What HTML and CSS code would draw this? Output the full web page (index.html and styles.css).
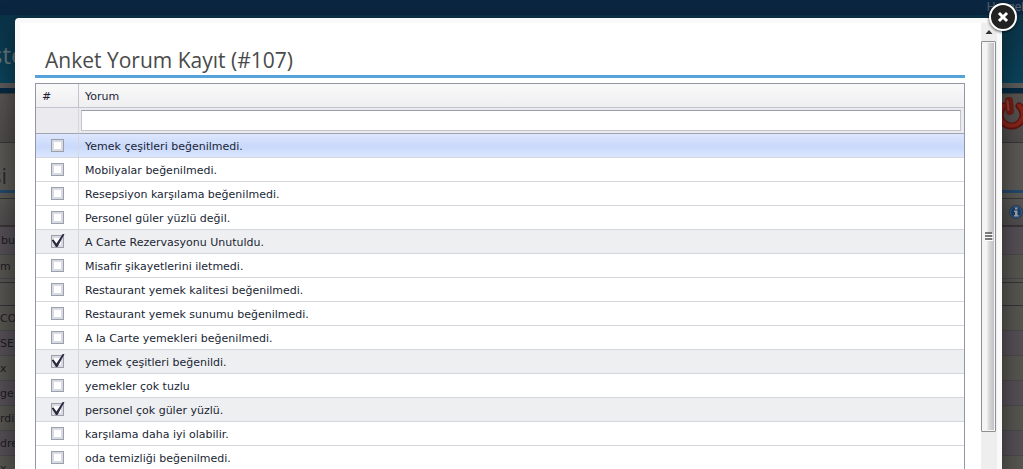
FILE: index.html
```html
<!DOCTYPE html>
<html lang="tr">
<head>
<meta charset="utf-8">
<title>Anket Yorum Kayıt</title>
<link rel="stylesheet" href="styles.css">
</head>
<body>
<div class="page" aria-hidden="true">
  <div class="topbar"><span>Hoşgel</span></div>
  <div class="banner"><span>ste</span></div>
  <div class="divider"></div>
  <div class="toolbar">
    <svg class="power" viewBox="0 0 32 34" width="32" height="34">
      <path d="M8 9 A11.500 11.500 0 1 0 23 9" fill="none" stroke="#5f130c" stroke-width="7" stroke-linecap="round"/>
      <path d="M8 8.500 A11.500 11.500 0 1 0 23 8.500" fill="none" stroke="#84241a" stroke-width="4" stroke-linecap="round"/>
      <path d="M13 4l1 10" stroke="#701d15" stroke-width="8" stroke-linecap="round"/>
      <path d="M11.500 4l1 9" stroke="#964037" stroke-width="2" stroke-linecap="round"/>
    </svg>
  </div>
  <div class="heading"><span>si</span></div>
  <div class="listhead">
    <svg viewBox="0 0 16 16" width="16" height="16">
      <circle cx="8" cy="8" r="6.500" fill="#1c3d62" stroke="#263e58"/>
      <circle cx="8" cy="8" r="5.500" fill="none" stroke="#3d6187"/>
      <path d="M7 3.500h2.500v2H7zM6 6.500h3.500v4.500h1v1.500H6V11h1V8H6z" fill="#9aa3ad"/>
    </svg>
  </div>
  <div class="line tall mauve inset">bu</div>
  <div class="line short">m</div>
  <div class="line gap"></div>
  <div class="line filler"></div>
  <div class="line">CO</div>
  <div class="line mauve">SE</div>
  <div class="line">x</div>
  <div class="line mauve">ge</div>
  <div class="line">rdi</div>
  <div class="line mauve">dre</div>
  <div class="line">x</div>
</div>

<div class="dialog" role="dialog" aria-labelledby="title">
  <div class="content">
    <h1 id="title">Anket Yorum Kayıt (#107)</h1>
    <table class="grid">
      <thead>
        <tr class="labels"><th class="pick">#</th><th>Yorum</th></tr>
        <tr class="filter"><td></td><td><input type="text" aria-label="Yorum"></td></tr>
      </thead>
      <tbody>
        <tr class="focused"><td><input type="checkbox" id="c1"></td><td><label for="c1">Yemek çeşitleri beğenilmedi.</label></td></tr>
        <tr><td><input type="checkbox" id="c2"></td><td><label for="c2">Mobilyalar beğenilmedi.</label></td></tr>
        <tr><td><input type="checkbox" id="c3"></td><td><label for="c3">Resepsiyon karşılama beğenilmedi.</label></td></tr>
        <tr><td><input type="checkbox" id="c4"></td><td><label for="c4">Personel güler yüzlü değil.</label></td></tr>
        <tr class="selected"><td><input type="checkbox" id="c5" checked></td><td><label for="c5">A Carte Rezervasyonu Unutuldu.</label></td></tr>
        <tr><td><input type="checkbox" id="c6"></td><td><label for="c6">Misafir şikayetlerini iletmedi.</label></td></tr>
        <tr><td><input type="checkbox" id="c7"></td><td><label for="c7">Restaurant yemek kalitesi beğenilmedi.</label></td></tr>
        <tr><td><input type="checkbox" id="c8"></td><td><label for="c8">Restaurant yemek sunumu beğenilmedi.</label></td></tr>
        <tr><td><input type="checkbox" id="c9"></td><td><label for="c9">A la Carte yemekleri beğenilmedi.</label></td></tr>
        <tr class="selected"><td><input type="checkbox" id="c10" checked></td><td><label for="c10">yemek çeşitleri beğenildi.</label></td></tr>
        <tr><td><input type="checkbox" id="c11"></td><td><label for="c11">yemekler çok tuzlu</label></td></tr>
        <tr class="selected"><td><input type="checkbox" id="c12" checked></td><td><label for="c12">personel çok güler yüzlü.</label></td></tr>
        <tr><td><input type="checkbox" id="c13"></td><td><label for="c13">karşılama daha iyi olabilir.</label></td></tr>
        <tr><td><input type="checkbox" id="c14"></td><td><label for="c14">oda temizliği beğenilmedi.</label></td></tr>
      </tbody>
    </table>
  </div>
  <div class="scrollbar">
    <svg class="arrow" viewBox="0 0 16 18" width="16" height="18"><path d="M8 7l3.500 4h-7z" fill="#333"/></svg>
    <div class="thumb">
      <svg viewBox="0 0 8 9" width="8" height="9"><path d="M0 1h7M0 4h7M0 7h7" stroke="#555" stroke-width="1.500"/><path d="M1 2.500h7M1 5.500h7M1 8.500h7" stroke="#fff" stroke-width="1"/></svg>
    </div>
  </div>
  <button class="close" type="button" aria-label="Kapat">
    <svg viewBox="0 0 12 12" width="12" height="12"><path d="M3 3l6 6M9 3l-6 6" stroke="#fff" stroke-width="3" stroke-linecap="square"/></svg>
  </button>
</div>
</body>
</html>
```

FILE: styles.css
```css
* { box-sizing: border-box; }

body {
  margin: 0;
  height: 100vh;
  overflow: hidden;
  font-family: Verdana, "DejaVu Sans", sans-serif;
  font-size: 11px;
  color: #201f35;
}

/* Dimmed page behind the dialog */
.page {
  height: 100vh;
  overflow: hidden;
  background: #5a5854;
  color: #211a22;
}
.page > div { display: flex; align-items: center; white-space: nowrap; }
.topbar {
  height: 15px;
  justify-content: flex-end;
  background: #0b2640;
  color: #56616b;
  font: 12px/12px "Liberation Sans", sans-serif;
}
.topbar span { margin-right: -1px; padding-bottom: 2px; }
.banner {
  height: 68px;
  padding-top: 12px;
  background: linear-gradient(#0b3247, #0a445c);
  color: #65757a;
  font: 24px/30px "Open Sans", sans-serif;
}
.banner span { margin-left: -9px; }
.divider {
  height: 11px;
  background: #062a42;
  border-top: 5px solid #5a5a5a;
  border-bottom: 1px solid #3e3c3b;
}
.toolbar {
  height: 49px;
  justify-content: flex-end;
  background: linear-gradient(#575452, #4d4a4a);
  border-bottom: 1px solid #383639;
}
.power { margin-right: -5px; margin-bottom: 8px; }
.heading {
  height: 50px;
  border-bottom: 3px solid #23486a;
  color: #29292b;
  font: 22px/30px "Open Sans", sans-serif;
}
.heading span { margin-left: -9px; padding-top: 16px; }
.listhead {
  height: 34px;
  justify-content: flex-end;
  padding-top: 5px;
  background: linear-gradient(#5a5854 5px, #363537 5px, #363537 6px, #595754 6px, #4d4b4c);
  border-bottom: 2px solid #39363a;
}
.listhead svg { margin-right: -1px; }
.line { height: 25px; background: #565550; border-bottom: 1px solid #48474a; }
.mauve { background: #544f55; }
.tall { height: 28px; }
.short { height: 24px; }
.gap { height: 4px; border-bottom-color: #343235; }
.filler { height: 23px; border-bottom-color: #343235; }
.inset { padding-left: 1px; }

/* Dialog */
.dialog {
  position: absolute;
  top: 18px;
  left: 15px;
  right: 21px;
  bottom: 0;
  display: flex;
  padding: 5px 5px 0;
  background: #f9f9f9;
  border-radius: 4px 4px 0 0;
  box-shadow: 0 10px 25px rgba(0, 0, 0, 0.5);
}
.content {
  flex: 1;
  min-width: 0;
  overflow: hidden;
  padding: 22px 16px 0 15px;
  background: #fff;
}
h1 {
  margin: 0 0 5px;
  padding: 0 10px;
  border-bottom: 3px solid #56a2db;
  font: 21px/30px "Open Sans", "Noto Sans", sans-serif;
  color: #4a4a4a;
}

.grid {
  width: 100%;
  table-layout: fixed;
  border-collapse: separate;
  border-spacing: 0;
  border: 1px solid #9396a4;
}
.grid th, .grid td {
  height: 24px;
  padding: 0 6px;
  border-bottom: 1px solid #d6d7de;
  text-align: left;
  font-weight: normal;
  line-height: 16px;
}
.grid th:first-child, .grid td:first-child { border-right: 1px solid #d6d7de; }
.grid .pick { width: 43px; }
.grid .labels th {
  padding-top: 2px;
  background: linear-gradient(#f9f9fa, #efeff1);
  border-color: #c3c4cd;
}
.grid .filter td {
  height: 26px;
  padding: 2px 3px 2px 2px;
  background: #ebebef;
  border-bottom-color: #a0a3b2;
}
.filter input {
  display: block;
  width: 100%;
  height: 21px;
  padding: 0 4px;
  border: 1px solid #c3c4cb;
  border-top-color: #9b9da7;
  background: #fff;
  font: inherit;
}
.focused td { background: linear-gradient(#dde6fd, #c9d9fb 55%, #dce6ff); }
.selected td { background: #eeeff1; }
.grid label { display: block; padding-top: 2px; }

input[type="checkbox"] {
  appearance: none;
  display: block;
  width: 13px;
  height: 13px;
  margin: 0 auto;
  border: 1px solid #9b9eab;
  background: #fff;
  box-shadow: inset 0 0 0 2px #d9dbe2;
}
input[type="checkbox"]:checked {
  overflow: visible;
  position: relative;
}
input[type="checkbox"]:checked::after {
  content: "";
  position: absolute;
  left: 0;
  top: -2px;
  width: 13px;
  height: 13px;
  background: #292a3f;
  clip-path: polygon(0 46%, 17% 44%, 38% 74%, 86% 0, 100% 0, 46% 100%, 34% 100%);
}

/* Scrollbar */
.scrollbar {
  display: flex;
  flex-direction: column;
  width: 16px;
  padding-bottom: 37px;
  background: #eee;
}
.thumb {
  flex: 1;
  display: flex;
  align-items: center;
  justify-content: center;
  width: 15px;
  border: 1px solid #8e8f90;
  border-radius: 1px;
  box-shadow: inset 0 0 0 1px #f4f4f4;
  background: linear-gradient(90deg, #f5f5f5 35%, #d8d8da 55%, #c3c3c8 90%);
}

.close {
  position: absolute;
  top: -15px;
  right: -15px;
  display: flex;
  align-items: center;
  justify-content: center;
  width: 28px;
  height: 28px;
  padding: 0;
  border: 2px solid #fff;
  border-radius: 50%;
  background: #222;
  box-shadow: 0 1px 3px rgba(0, 0, 0, 0.7);
}
```
